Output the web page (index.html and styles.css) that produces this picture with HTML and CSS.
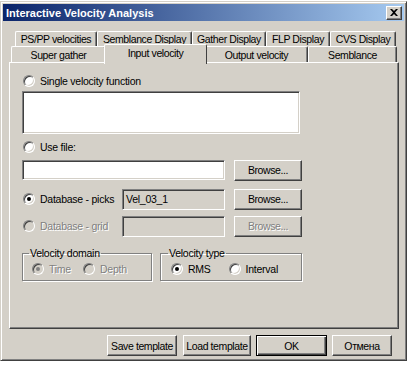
FILE: index.html
```html
<!DOCTYPE html>
<html lang="en">
<head>
    <meta charset="UTF-8">
    <title>Interactive Velocity Analysis</title>
    <link rel="stylesheet" href="styles.css">
</head>
<body>
    <div class="dialog">
        <div class="titlebar">
            <span class="title">Interactive Velocity Analysis</span>
            <button class="close">
                <svg width="8" height="7" viewBox="0 0 8 7"><path d="M0 0h2l2 2 2-2h2L5 3.5 8 7H6L4 5 2 7H0l3-3.5z" fill="#000"/></svg>
            </button>
        </div>
        <div class="content">
            <div class="tab-row back">
                <div class="tab t-pspp">PS/PP velocities</div>
                <div class="tab t-sdisp">Semblance Display</div>
                <div class="tab t-gdisp">Gather Display</div>
                <div class="tab t-flp">FLP Display</div>
                <div class="tab t-cvs">CVS Display</div>
            </div>
            <div class="tab-row front">
                <div class="tab t-super">Super gather</div>
                <div class="tab t-input active">Input velocity</div>
                <div class="tab t-output">Output velocity</div>
                <div class="tab t-semb">Semblance</div>
            </div>
            <div class="panel">
                <label class="option single"><span class="radio"></span>Single velocity function</label>
                <div class="field memo"></div>

                <label class="option usefile"><span class="radio"></span>Use file:</label>
                <div class="line file-line">
                    <div class="field file"></div>
                    <button class="btn browse">Browse...</button>
                </div>

                <div class="line picks">
                    <label class="option"><span class="radio checked"></span>Database - picks</label>
                    <div class="field readonly">Vel_03_1</div>
                    <button class="btn browse">Browse...</button>
                </div>

                <div class="line grid">
                    <label class="option disabled"><span class="radio disabled"></span>Database - grid</label>
                    <div class="field readonly"></div>
                    <button class="btn browse disabled">Browse...</button>
                </div>

                <div class="groups">
                    <fieldset class="group domain">
                        <legend>Velocity domain</legend>
                        <label class="option disabled"><span class="radio checked disabled"></span>Time</label>
                        <label class="option disabled"><span class="radio disabled"></span>Depth</label>
                    </fieldset>
                    <fieldset class="group vtype">
                        <legend>Velocity type</legend>
                        <label class="option"><span class="radio checked"></span>RMS</label>
                        <label class="option"><span class="radio"></span>Interval</label>
                    </fieldset>
                </div>
            </div>
            <div class="footer">
                <button class="btn save">Save template</button>
                <button class="btn load">Load template</button>
                <button class="btn ok default">OK</button>
                <button class="btn cancel">Отмена</button>
            </div>
        </div>
    </div>
</body>
</html>
```
FILE: styles.css
```css
body {
    margin: 0;
    background: #fff;
    font-family: 'Liberation Sans', Arial, sans-serif;
    font-size: 10.5px;
    letter-spacing: -0.25px;
    color: #000;
}
.dialog {
    box-sizing: border-box;
    width: 407px;
    height: 360px;
    margin-top: 1px;
    padding: 2px;
    background: #d4d0c8;
    border: 1px solid;
    border-color: #d4d0c8 #404040 #404040 #d4d0c8;
    box-shadow: inset 1px 1px #fff, inset -1px -1px #808080;
}
.titlebar {
    height: 17px;
    display: flex;
    align-items: center;
    justify-content: space-between;
    padding: 0 2px 0 3px;
    background: linear-gradient(to right, #0a246a, #a6caf0);
}
.title {
    color: #fff;
    font-weight: bold;
    font-size: 11px;
    letter-spacing: 0;
}
.close {
    width: 16px;
    height: 14px;
    padding: 0;
    display: flex;
    align-items: center;
    justify-content: center;
    background: #d4d0c8;
    border: 1px solid;
    border-color: #fff #404040 #404040 #fff;
    box-shadow: inset -1px -1px #808080;
}
.content {
    padding: 10px 4px 0 6px;
}

/* tabs */
.tab-row {
    display: flex;
    height: 15px;
}
.tab-row.back {
    margin-left: 6px;
}
.tab-row.front {
    margin-left: 2px;
    height: 16px;
}
.tab {
    box-sizing: border-box;
    display: flex;
    align-items: center;
    justify-content: center;
    letter-spacing: -0.4px;
    border-top: 1px solid #fff;
    border-left: 1px solid #fff;
    border-right: 1px solid #404040;
    box-shadow: inset -1px 0 #808080;
    border-radius: 2px 2px 0 0;
    white-space: nowrap;
}
.t-pspp { width: 82px; }
.t-sdisp { width: 95px; }
.t-gdisp { width: 74px; }
.t-flp { width: 64px; }
.t-cvs { width: 66px; }
.t-super { width: 95px; }
.t-input { width: 99px; }
.t-output { width: 103px; }
.t-semb { width: 89px; }
.tab.active {
    position: relative;
    z-index: 1;
    width: 103px;
    height: 20px;
    margin: -2px -2px -2px;
    padding-bottom: 4px;
    background: #d4d0c8;
    box-shadow: none;
}

/* panel */
.panel {
    box-sizing: border-box;
    width: 390px;
    height: 267px;
    padding: 10px 12px 0;
    border: 1px solid;
    border-color: #fff #404040 #404040 #fff;
    box-shadow: inset -1px -1px #808080;
}
.option {
    display: flex;
    align-items: center;
    height: 16px;
    white-space: nowrap;
}
.option.disabled,
.btn.disabled {
    color: #808080;
    text-shadow: 1px 1px #fff;
}
.radio {
    box-sizing: border-box;
    position: relative;
    width: 12px;
    height: 12px;
    margin: 0 5px 0 1px;
    border-radius: 50%;
    background: #fff;
    border: 1px solid;
    border-color: #808080 #fff #fff #808080;
    box-shadow: inset 1px 1px #404040, inset -1px -1px #d4d0c8;
}
.radio.disabled {
    background: #d4d0c8;
}
.radio.checked::after {
    content: "";
    position: absolute;
    left: 3px;
    top: 3px;
    width: 4px;
    height: 4px;
    border-radius: 50%;
    background: #000;
}
.radio.checked.disabled::after {
    background: #808080;
}
.field {
    box-sizing: border-box;
    background: #fff;
    border: 1px solid;
    border-color: #808080 #fff #fff #808080;
    box-shadow: inset 1px 1px #404040, inset -1px -1px #d4d0c8;
}
.memo {
    width: 278px;
    height: 43px;
    margin-top: 2px;
}
.usefile {
    margin-top: 5px;
}
.line {
    display: flex;
    align-items: center;
    height: 22px;
}
.file-line {
    margin-top: 4px;
}
.file {
    width: 203px;
    height: 20px;
}
.picks {
    margin-top: 7px;
}
.grid {
    margin-top: 5px;
}
.line .option {
    width: 100px;
}
.readonly {
    width: 103px;
    height: 21px;
    padding: 3px 0 0 3px;
    background: #d4d0c8;
}
.btn {
    box-sizing: border-box;
    height: 21px;
    padding: 0;
    font: inherit;
    letter-spacing: -0.4px;
    white-space: nowrap;
    color: #000;
    background: #d4d0c8;
    border: 1px solid;
    border-color: #fff #404040 #404040 #fff;
    box-shadow: inset -1px -1px #808080, inset 1px 1px #d4d0c8;
}
.browse {
    width: 68px;
    margin-left: 9px;
}

/* group boxes */
.groups {
    display: flex;
    gap: 8px;
    margin-top: 10px;
}
.group {
    box-sizing: border-box;
    display: flex;
    align-items: center;
    height: 34px;
    margin: 0;
    padding: 0 0 2px 8px;
    border: 1px solid #808080;
    box-shadow: 1px 1px #fff, inset 1px 1px #fff;
}
.group legend {
    padding: 0 1px;
    margin-left: -2px;
}
.domain {
    width: 130px;
    gap: 11px;
}
.vtype {
    width: 142px;
    gap: 17px;
    padding-left: 9px;
}

/* bottom buttons */
.footer {
    display: flex;
    justify-content: flex-end;
    gap: 5px;
    margin-top: 6px;
    padding-right: 8px;
}
.save { width: 70px; margin-right: 1px; }
.load { width: 68px; }
.ok { width: 71px; }
.cancel { width: 60px; }
.btn.default {
    border: 1px solid #000;
    box-shadow: inset 1px 1px #fff, inset -1px -1px #404040, inset -2px -2px #808080;
}
```
